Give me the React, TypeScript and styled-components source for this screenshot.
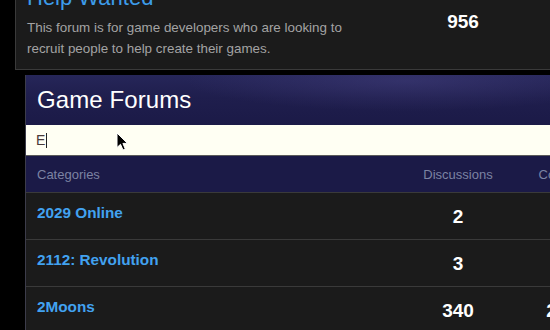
import React from 'react';
import styled, { createGlobalStyle } from 'styled-components';

const GlobalStyle = createGlobalStyle`
	html, body {
		margin: 0;
		padding: 0;
		background: #000;
		overflow: hidden;
	}
	body {
		width: 550px;
		height: 330px;
		font-family: 'Liberation Sans', Arial, sans-serif;
	}
`;

const Page = styled.div`
	position: relative;
	width: 550px;
	height: 330px;
	overflow: hidden;
	background: #000;
`;

// 위쪽 포럼 카드 (잘려 보이는 부분)
const ForumCard = styled.div`
	display: flex;
	margin: -15px 0 0 15px;
	width: 700px;
	background: #1b1b1b;
	border-left: 1px solid #3a3a3a;
	border-bottom: 1px solid #3a3a3a;
`;

const ForumInfo = styled.div`
	width: 402px;
	box-sizing: border-box;
	padding: 0 11px 10px 11px;
`;

const ForumTitle = styled.div`
	font-size: 22px;
	line-height: 25px;
	color: #3d9be9;
`;

const ForumDesc = styled.p`
	margin: 7px 0 0 0;
	max-width: 330px;
	font-size: 13.4px;
	line-height: 21px;
	color: #a3a3a3;
`;

const CountCell = styled.div<{ $padTop: number; $width?: number }>`
	width: ${({ $width }) => $width ?? 90}px;
	padding-top: ${({ $padTop }) => $padTop}px;
	text-align: center;
	font-size: 19px;
	line-height: 22px;
	font-weight: bold;
	color: #fff;
`;

// 게임 포럼 목록
const ForumPanel = styled.div`
	margin: 5px 0 0 25px;
	width: 640px;
	border-left: 1px solid #3c3c4a;
	background: #1b1b1b;
`;

const PanelHeader = styled.div`
	height: 50px;
	display: flex;
	align-items: center;
	padding-left: 11px;
	background:
		radial-gradient(ellipse 220px 30px at 380px 6px, rgba(70, 66, 130, 0.45), transparent),
		linear-gradient(180deg, #262659 0%, #1f1e4d 45%, #1b1a47 100%);
`;

const PanelTitle = styled.h1`
	margin: 0;
	font-size: 24px;
	font-weight: normal;
	color: #fff;
	letter-spacing: 0.1px;
`;

const SearchBox = styled.div`
	height: 30px;
	display: flex;
	align-items: center;
	padding-left: 10px;
	background: #fffff3;
	border-bottom: 1px solid #5a5a5a;
	font-size: 14px;
	color: #4a3a3a;
`;

const Caret = styled.span`
	display: inline-block;
	width: 1px;
	height: 15px;
	margin-left: 1px;
	background: #222;
`;

const Grid = styled.div`
	display: grid;
	grid-template-columns: 387px 90px 134px;
`;

const HeadRow = styled(Grid)`
	height: 36px;
	align-items: center;
	padding-top: 1px;
	box-sizing: border-box;
	background: #1b1a47;
	font-size: 13px;
	color: #7c83a3;
`;

const HeadCell = styled.div<{ $center?: boolean }>`
	padding-left: ${({ $center }) => ($center ? 0 : 11)}px;
	text-align: ${({ $center }) => ($center ? 'center' : 'left')};
`;

const Row = styled(Grid)`
	height: 46px;
	border-top: 1px solid #3a3a3a;
	background: #1b1b1b;
`;

const CategoryName = styled.a`
	padding: 11px 0 0 11px;
	font-size: 15.3px;
	line-height: 18px;
	font-weight: bold;
	color: #42a2f0;
	text-decoration: none;
`;

const Pointer = styled.svg`
	position: absolute;
	left: 116px;
	top: 132px;
`;

const categories = [
	{ name: '2029 Online', discussions: '2', comments: '14' },
	{ name: '2112: Revolution', discussions: '3', comments: '21' },
	{ name: '2Moons', discussions: '340', comments: '2,486' },
];

const App: React.FC = () => (
	<Page>
		<GlobalStyle />
		<ForumCard>
			<ForumInfo>
				<ForumTitle>Help Wanted</ForumTitle>
				<ForumDesc>
					This forum is for game developers who are looking to recruit people to help create their games.
				</ForumDesc>
			</ForumInfo>
			<CountCell $padTop={26}>956</CountCell>
		</ForumCard>

		<ForumPanel>
			<PanelHeader>
				<PanelTitle>Game Forums</PanelTitle>
			</PanelHeader>
			<SearchBox>
				E<Caret />
			</SearchBox>
			<HeadRow>
				<HeadCell>Categories</HeadCell>
				<HeadCell $center>Discussions</HeadCell>
				<HeadCell $center>Comments</HeadCell>
			</HeadRow>
			{categories.map((c) => (
				<Row key={c.name}>
					<CategoryName href="#">{c.name}</CategoryName>
					<CountCell $padTop={13}>{c.discussions}</CountCell>
					<CountCell $padTop={13} $width={134}>{c.comments}</CountCell>
				</Row>
			))}
		</ForumPanel>

		<Pointer width="14" height="20" viewBox="0 0 14 20">
			<path d="M1 1 L1 15.5 L4.5 12.3 L7 18 L9.3 17 L6.9 11.4 L11.5 11.4 Z" fill="#000" stroke="#fff" strokeWidth="1" strokeLinejoin="round" />
		</Pointer>
	</Page>
);

export default App;
